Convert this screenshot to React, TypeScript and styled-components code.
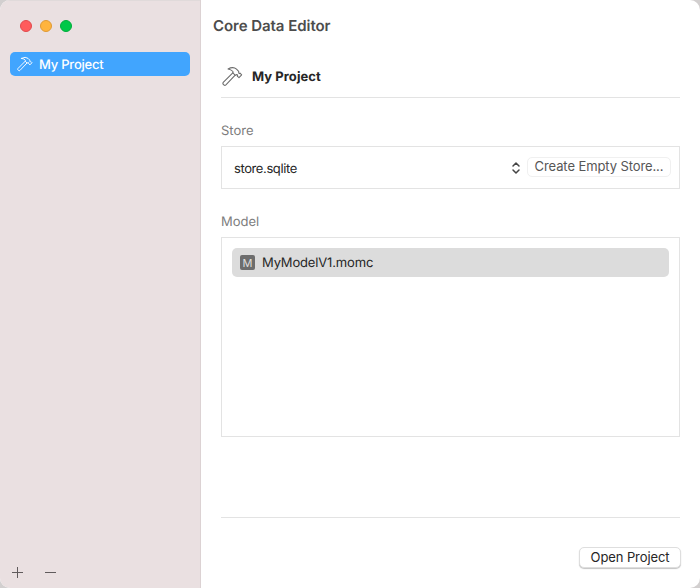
import React from 'react';
import styled, { createGlobalStyle } from 'styled-components';

const GlobalStyle = createGlobalStyle`
  * { box-sizing: border-box; }
  body { margin: 0; background: #d2cfcf; font-family: Inter, "Liberation Sans", sans-serif; font-size: 13px; text-rendering: geometricPrecision; }
`;

const Window = styled.div`
  display: grid;
  grid-template-columns: 201px 1fr;
  width: 700px;
  height: 588px;
  overflow: hidden;
  border-radius: 10px;
  background: #fff;
`;

const Sidebar = styled.aside`
  display: flex;
  flex-direction: column;
  padding: 20px 10px 8px;
  background: #eae0e1;
  border-right: 1px solid #dcd2d3;
  box-shadow: inset 0 1px 0 #e0dada;
`;

const TrafficLights = styled.div`
  display: flex;
  gap: 8px;
  padding-left: 10px;
  margin-bottom: 20px;
`;

const Light = styled.span<{ $fill: string; $edge: string }>`
  width: 12px;
  height: 12px;
  border-radius: 50%;
  background: ${p => p.$fill};
  border: 1px solid ${p => p.$edge};
`;

const ProjectRow = styled.div`
  display: flex;
  align-items: center;
  height: 24px;
  padding-left: 7px;
  gap: 6px;
  border-radius: 5px;
  background: #41a5fe;
  color: #fff;
`;

const SidebarActions = styled.div`
  display: flex;
  gap: 17px;
  margin-top: auto;
  margin-left: -1px;
  color: #605b5c;
`;

const IconButton = styled.button`
  display: flex;
  padding: 0;
  border: 0;
  background: none;
  color: inherit;
`;

const Main = styled.main`
  display: flex;
  flex-direction: column;
  padding: 0 20px 20px;
`;

const Title = styled.h1`
  margin: 0 0 0 -8px;
  height: 52px;
  line-height: 52px;
  font-size: 15px;
  font-weight: 600;
  letter-spacing: -0.05px;
  color: #4c4c4c;
`;

const ProjectHeader = styled.header`
  display: flex;
  align-items: center;
  gap: 9px;
  height: 46px;
  padding: 3px 0 0 1px;
  border-bottom: 1px solid #e3e3e3;
`;

const Label = styled.span<{ $weight?: number; $spacing?: number; $color?: string; $drop?: number }>`
  line-height: 16px;
  white-space: nowrap;
  font-weight: ${p => p.$weight ?? 400};
  letter-spacing: ${p => p.$spacing ?? 0}px;
  color: ${p => p.$color ?? '#262626'};
  padding-top: ${p => p.$drop ?? 0}px;
`;

const Section = styled.section`
  display: flex;
  flex-direction: column;
  gap: 7px;
  margin-top: 25px;
`;

const StoreBox = styled.div`
  display: flex;
  align-items: center;
  height: 43px;
  padding: 0 8px 0 12px;
  border: 1px solid #e3e3e3;
`;

const StorePicker = styled.div`
  display: flex;
  align-items: center;
  justify-content: space-between;
  flex: 1;
  margin-right: 6px;
`;

const Button = styled.button<{ $primary?: boolean }>`
  display: flex;
  align-items: center;
  justify-content: center;
  width: ${p => (p.$primary ? 102 : 144)}px;
  height: ${p => (p.$primary ? 21 : 20)}px;
  margin: ${p => (p.$primary ? '0 -1px 0 0' : '-2px 0 0')};
  padding: ${p => (p.$primary ? '0 0 1px' : '0 0 2px')};
  border: 1px solid ${p => (p.$primary ? '#dedede' : '#f0f0f0')};
  border-radius: 5px;
  background: #fff;
  box-shadow: ${p => (p.$primary ? '0 1px 1px #c4c4c4' : 'none')};
  font: inherit;
`;

const ModelBox = styled.div`
  height: 200px;
  padding: 10px;
  border: 1px solid #e3e3e3;
`;

const ModelRow = styled.div`
  display: flex;
  align-items: center;
  gap: 7px;
  height: 29px;
  padding-left: 8px;
  border-radius: 5px;
  background: #dcdcdc;
`;

const ModelBadge = styled.span`
  display: flex;
  align-items: center;
  justify-content: center;
  width: 15px;
  height: 15px;
  border-radius: 2px;
  background: #6d6d6d;
  color: #dedede;
  font-size: 11px;
`;

const Footer = styled.footer`
  display: flex;
  justify-content: flex-end;
  margin-top: auto;
  padding-top: 29px;
  border-top: 1px solid #e3e3e3;
`;

function Hammer({ size, color }: { size: number; color: string }) {
  return (
    <svg width={size} height={size} viewBox="0 0 22 22" fill="none" stroke={color} strokeWidth={size < 20 ? 1.3 : 1.1} strokeLinejoin="round" strokeLinecap="round">
      <path d="M11.3 7.2 1.3 17.2Q.5 18.3 1.4 19.2L2.2 20Q3.1 20.7 4.1 19.8L13.8 9.6" />
      <path d="M6.3 3.2Q11.7.2 15.2 3.3L17.2 5.3Q18 6.2 17.4 7.3L18.2 8 18.9 7.5 20.6 9.2 17.8 12.2 16 10.5 16.4 9.6 15.5 8.9Q14.6 9.8 13.8 9.6L11.3 7.2Q11.9 6.2 11.2 5.5 9.5 3.8 6.3 3.2Z" />
    </svg>
  );
}

export default function App() {
  return (
    <>
      <GlobalStyle />
      <Window>
        <Sidebar>
          <TrafficLights>
            <Light $fill="#ff5b5c" $edge="#e14a4d" />
            <Light $fill="#ffb43d" $edge="#df9a35" />
            <Light $fill="#00c848" $edge="#00ad3b" />
          </TrafficLights>
          <ProjectRow>
            <Hammer size={16} color="#fff" />
            <Label $color="#fff" $weight={500} $spacing={-0.22} $drop={1}>My Project</Label>
          </ProjectRow>
          <SidebarActions>
            <IconButton aria-label="Add project">
              <svg width="16" height="16" viewBox="0 0 16 16" stroke="currentColor"><path d="M3 8.5h11M8.5 3v11" /></svg>
            </IconButton>
            <IconButton aria-label="Remove project">
              <svg width="16" height="16" viewBox="0 0 16 16" stroke="currentColor"><path d="M3 8.5h11" /></svg>
            </IconButton>
          </SidebarActions>
        </Sidebar>
        <Main>
          <Title>Core Data Editor</Title>
          <ProjectHeader>
            <Hammer size={21} color="#6c6c6c" />
            <Label $weight={700} $spacing={0.06} $drop={1}>My Project</Label>
          </ProjectHeader>
          <Section>
            <Label $color="#7d7d7d">Store</Label>
            <StoreBox>
              <StorePicker>
                <Label $spacing={-0.4} $drop={2}>store.sqlite</Label>
                <svg width="10" height="14" viewBox="0 0 10 14" fill="none" stroke="#444" strokeWidth="1.5" strokeLinecap="round" strokeLinejoin="round">
                  <path d="M2 5 5 2l3 3M2 9l3 3 3-3" />
                </svg>
              </StorePicker>
              <Button><Label $color="#565656" $spacing={-0.1}>Create Empty Store...</Label></Button>
            </StoreBox>
          </Section>
          <Section>
            <Label $color="#7d7d7d">Model</Label>
            <ModelBox>
              <ModelRow>
                <ModelBadge>M</ModelBadge>
                <Label $spacing={-0.16} $drop={1}>MyModelV1.momc</Label>
              </ModelRow>
            </ModelBox>
          </Section>
          <Footer>
            <Button $primary><Label $spacing={-0.1}>Open Project</Label></Button>
          </Footer>
        </Main>
      </Window>
    </>
  );
}
